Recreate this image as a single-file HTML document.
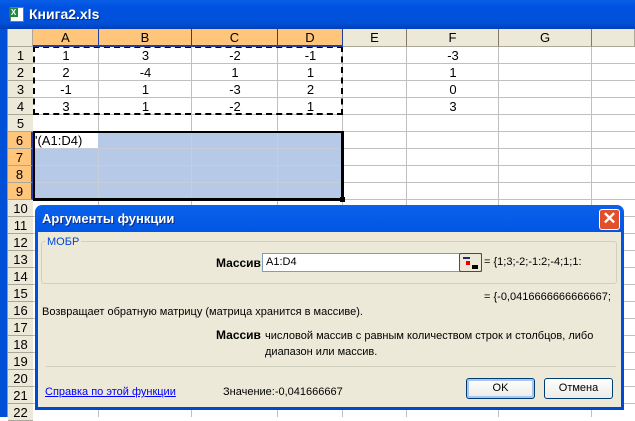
<!DOCTYPE html>
<html><head><meta charset="utf-8"><style>
*{margin:0;padding:0;box-sizing:border-box}
body{width:635px;height:417px;overflow:hidden;position:relative;background:#fff;font-family:"Liberation Sans",Arial,sans-serif}
.a{position:absolute}
.hl{position:absolute;left:8px;width:627px;height:1px;background:#c0c0c0}
.vl{position:absolute;top:29px;width:1px;height:388px;background:#c0c0c0}
.rh{position:absolute;left:8px;width:25px;height:17px;background:#ece9d8;border-bottom:1px solid #aca899;font-size:13px;text-align:center;line-height:17px;color:#000}
.rh.s{background:#ffc57a;border-right:2px solid #1f3fa6}
.ch{position:absolute;top:29px;height:18px;background:#ece9d8;border-right:1px solid #aca899;border-bottom:1px solid #aca899;font-size:13px;text-align:center;line-height:18px}
.ch.s{background:#ffc57a;border-bottom:2px solid #1f3fa6;border-right:1px solid #1f3fa6}
.c{position:absolute;font-size:13px;text-align:center;line-height:17px;height:17px}
.d{font-family:"Liberation Sans",Tahoma,sans-serif;font-size:11px;position:absolute;white-space:nowrap}
</style></head><body>
<!-- title bar -->
<div class="a" style="left:0;top:0;width:635px;height:29px;background:linear-gradient(#0a5fe8,#0053e0 20%,#0050d8 80%,#003fb8)"></div>
<div class="a" style="left:10px;top:7px;width:14px;height:15px;background:#fff;border:1px solid #6a7a8a"></div>
<div class="a" style="left:9px;top:8px;width:9px;height:9px;background:#1e8a3a;color:#fff;font-size:8px;font-weight:bold;text-align:center;line-height:9px">X</div>
<div class="a" style="left:29px;top:6px;color:#fff;font-weight:bold;font-size:14px;text-shadow:1px 1px #0a2a80">Книга2.xls</div>
<div class="a" style="left:0;top:29px;width:8px;height:388px;background:#0050d8"></div>
<div class="a" style="left:7px;top:29px;width:1px;height:388px;background:#7a96df"></div>

<!-- grid lines -->
<div id="g"></div>
<div class="hl" style="top:63px"></div><div class="hl" style="top:80px"></div><div class="hl" style="top:97px"></div><div class="hl" style="top:114px"></div><div class="hl" style="top:131px"></div><div class="hl" style="top:148px"></div><div class="hl" style="top:165px"></div><div class="hl" style="top:182px"></div><div class="hl" style="top:199px"></div><div class="hl" style="top:216px"></div><div class="hl" style="top:233px"></div><div class="hl" style="top:250px"></div><div class="hl" style="top:267px"></div><div class="hl" style="top:284px"></div><div class="hl" style="top:301px"></div><div class="hl" style="top:318px"></div><div class="hl" style="top:335px"></div><div class="hl" style="top:352px"></div><div class="hl" style="top:369px"></div><div class="hl" style="top:386px"></div><div class="hl" style="top:403px"></div>
<div class="vl" style="left:98px"></div><div class="vl" style="left:191px"></div><div class="vl" style="left:277px"></div><div class="vl" style="left:342px"></div><div class="vl" style="left:406px"></div><div class="vl" style="left:498px"></div><div class="vl" style="left:591px"></div>

<!-- selection fill -->
<div class="a" style="left:33px;top:131px;width:310px;height:69px;background:#b6c9e6"></div>
<div class="a" style="left:35px;top:133px;width:63px;height:15px;background:#fff"></div>
<div class="vl" style="left:98px;top:148px;height:52px;background:#c8cdd8"></div><div class="vl" style="left:191px;top:133px;height:67px;background:#c8cdd8"></div><div class="vl" style="left:277px;top:133px;height:67px;background:#c8cdd8"></div>
<div class="hl" style="left:35px;width:306px;top:148px;background:#c8cdd8"></div><div class="hl" style="left:35px;width:306px;top:165px;background:#c8cdd8"></div><div class="hl" style="left:35px;width:306px;top:182px;background:#c8cdd8"></div>
<div class="a" style="left:33px;top:131px;width:311px;height:70px;border:3px solid #000;border-left-width:2px;border-top-width:2px"></div>
<div class="a" style="left:340px;top:197px;width:5px;height:5px;background:#000"></div>
<!-- dashed -->
<div class="a" style="left:33px;top:46px;width:310px;height:69px;border:2px dashed #000"></div>

<!-- headers -->
<div class="a" style="left:8px;top:29px;width:25px;height:18px;background:#ece9d8;border-right:1px solid #aca899;border-bottom:1px solid #aca899"></div>
<div class="ch s" style="left:33px;width:66px">A</div>
<div class="ch s" style="left:99px;width:93px">B</div>
<div class="ch s" style="left:192px;width:86px">C</div>
<div class="ch s" style="left:278px;width:65px">D</div>
<div class="ch" style="left:343px;width:64px;border-right-color:#807a6a">E</div>
<div class="ch" style="left:407px;width:92px;border-right-color:#807a6a">F</div>
<div class="ch" style="left:499px;width:93px;border-right-color:#807a6a">G</div>
<div class="ch" style="left:592px;width:43px"></div>

<div class="rh" style="top:47px">1</div><div class="rh" style="top:64px">2</div><div class="rh" style="top:81px">3</div><div class="rh" style="top:98px">4</div><div class="rh" style="top:115px">5</div>
<div class="rh s" style="top:132px">6</div><div class="rh s" style="top:149px">7</div><div class="rh s" style="top:166px">8</div><div class="rh s" style="top:183px">9</div>
<div class="rh" style="top:200px">10</div><div class="rh" style="top:217px">11</div><div class="rh" style="top:234px">12</div><div class="rh" style="top:251px">13</div><div class="rh" style="top:268px">14</div><div class="rh" style="top:285px">15</div><div class="rh" style="top:302px">16</div><div class="rh" style="top:319px">17</div><div class="rh" style="top:336px">18</div><div class="rh" style="top:353px">19</div><div class="rh" style="top:370px">20</div><div class="rh" style="top:387px">21</div><div class="rh" style="top:404px">22</div>

<!-- values -->
<div class="c" style="left:33px;width:66px;top:47px">1</div><div class="c" style="left:99px;width:93px;top:47px">3</div><div class="c" style="left:192px;width:86px;top:47px">-2</div><div class="c" style="left:278px;width:65px;top:47px">-1</div><div class="c" style="left:407px;width:92px;top:47px">-3</div>
<div class="c" style="left:33px;width:66px;top:64px">2</div><div class="c" style="left:99px;width:93px;top:64px">-4</div><div class="c" style="left:192px;width:86px;top:64px">1</div><div class="c" style="left:278px;width:65px;top:64px">1</div><div class="c" style="left:407px;width:92px;top:64px">1</div>
<div class="c" style="left:33px;width:66px;top:81px">-1</div><div class="c" style="left:99px;width:93px;top:81px">1</div><div class="c" style="left:192px;width:86px;top:81px">-3</div><div class="c" style="left:278px;width:65px;top:81px">2</div><div class="c" style="left:407px;width:92px;top:81px">0</div>
<div class="c" style="left:33px;width:66px;top:98px">3</div><div class="c" style="left:99px;width:93px;top:98px">1</div><div class="c" style="left:192px;width:86px;top:98px">-2</div><div class="c" style="left:278px;width:65px;top:98px">1</div><div class="c" style="left:407px;width:92px;top:98px">3</div>
<div class="c" style="left:35px;top:132px;text-align:left">'(A1:D4)</div>

<!-- dialog -->
<div class="a" style="left:35px;top:205px;width:589px;height:205px;background:#0054e3;border-radius:7px 7px 0 0;background:linear-gradient(#0a62ea,#0054e3 15%,#0048d0)"></div>
<div class="a" style="left:38px;top:232px;width:583px;height:175px;background:#ece9d8"></div>
<div class="d" style="left:42px;top:211px;color:#fff;font-weight:bold;font-size:13px;text-shadow:1px 1px #0a2a80">Аргументы функции</div>
<div class="a" style="left:599px;top:209px;width:21px;height:21px;background:#e0502a;border:1px solid #fff;border-radius:3px;color:#fff;font-size:17px;line-height:18px;text-align:center;font-weight:bold">✕</div>
<div class="a" style="left:41px;top:241px;width:576px;height:43px;border:1px solid #d0d0bf;border-radius:3px"></div>
<div class="d" style="left:45px;top:236px;background:#ece9d8;color:#0046d5;padding:0 2px">МОБР</div>
<div class="d" style="left:216px;top:256px;font-weight:bold;font-size:12px">Массив</div>
<div class="a" style="left:262px;top:253px;width:220px;height:19px;background:#fff;border:1px solid #7f9db9"></div>
<div class="d" style="left:266px;top:256px">A1:D4</div>
<div class="a" style="left:459px;top:253px;width:23px;height:19px;background:#ece9d8;border:1px solid #2c4e8a;border-radius:2px"></div>
<div class="a" style="left:463px;top:257px;width:7px;height:2px;background:#1f2a7a"></div>
<div class="a" style="left:466px;top:261px;width:4px;height:4px;background:#e00"></div>
<div class="a" style="left:472px;top:265px;width:6px;height:4px;background:#000"></div>
<div class="d" style="left:484px;top:256px">= {1;3;-2;-1:2;-4;1;1:</div>
<div class="d" style="left:484px;top:291px">= {-0,0416666666666667;</div>
<div class="d" style="left:42px;top:306px">Возвращает обратную матрицу (матрица хранится в массиве).</div>
<div class="d" style="left:216px;top:328px;font-weight:bold;font-size:12px">Массив</div>
<div class="d" style="left:265px;top:328px;line-height:16px">числовой массив с равным количеством строк и столбцов, либо<br>диапазон или массив.</div>
<div class="a" style="left:46px;top:366px;width:570px;height:1px;background:#d0d0bf"></div>
<div class="d" style="left:45px;top:386px;color:#0000ff;text-decoration:underline">Справка по этой функции</div>
<div class="d" style="left:223px;top:386px">Значение:-0,041666667</div>
<div class="a d" style="left:466px;top:378px;width:69px;height:21px;border:1px solid #003c74;border-radius:3px;background:linear-gradient(#fff,#ecebe6);box-shadow:inset 0 0 0 2px #a8c6f0;text-align:center;line-height:19px">OK</div>
<div class="a d" style="left:544px;top:378px;width:69px;height:21px;border:1px solid #003c74;border-radius:3px;background:linear-gradient(#fff,#ecebe6);text-align:center;line-height:19px">Отмена</div>
</body></html>
